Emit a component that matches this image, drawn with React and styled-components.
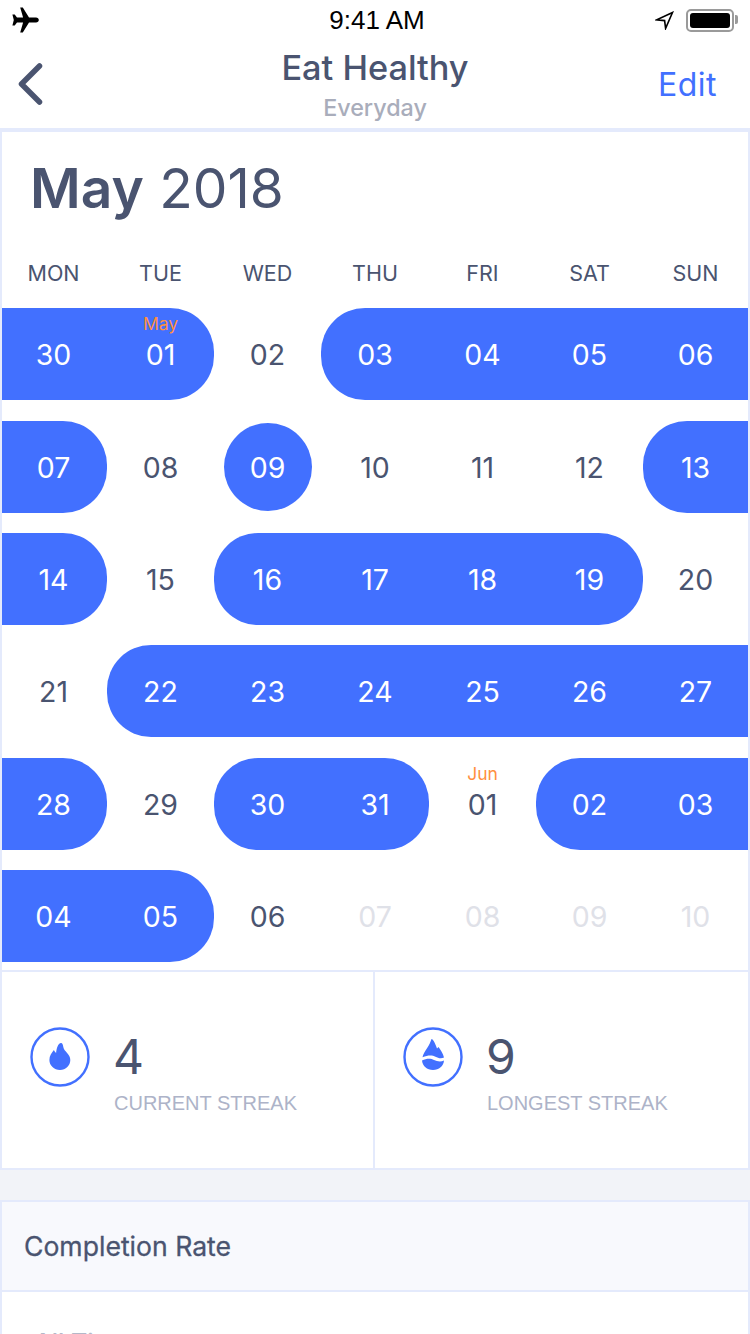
import React from 'react';
import styled, { createGlobalStyle } from 'styled-components';

const Global = createGlobalStyle`
  html, body { margin: 0; padding: 0; background: #fff; height: 1334px; overflow: hidden; }
  * { box-sizing: border-box; }
  body { font-family: Inter, "Liberation Sans", sans-serif; }
`;

const Page = styled.div`
  width: 750px;
  height: 1334px;
  overflow: hidden;
  background: #fff;
  display: flex;
  flex-direction: column;
`;

const StatusBar = styled.div`
  height: 40px;
  flex: none;
  position: relative;
  display: flex;
  align-items: center;
  justify-content: space-between;
  padding: 0 16px 0 11px;
`;

const StatusTime = styled.div`
  font: 400 26px/40px "Liberation Sans", sans-serif;
  color: #000;
  position: absolute;
  left: 4px;
  right: 0;
  text-align: center;
`;

const StatusRight = styled.div`
  display: flex;
  align-items: center;
  gap: 12px;
`;

const Battery = styled.div`
  width: 48px;
  height: 23px;
  border: 2px solid #9a9a9a;
  border-radius: 5px;
  padding: 2px;
  position: relative;
  &::before {
    content: '';
    display: block;
    height: 100%;
    background: #000;
    border-radius: 3px;
  }
  &::after {
    content: '';
    position: absolute;
    right: -6px;
    top: 4px;
    width: 3px;
    height: 9px;
    background: #9a9a9a;
    border-radius: 0 2px 2px 0;
  }
`;

const NavBar = styled.div`
  height: 88px;
  flex: none;
  position: relative;
  display: flex;
  align-items: center;
  justify-content: space-between;
  padding: 0 33px 0 17px;
`;

const NavCenter = styled.div`
  position: absolute;
  left: 0;
  right: 0;
  top: 3px;
  text-align: center;
`;

const NavTitle = styled.div`
  font-size: 34.3px;
  line-height: 50px;
  font-weight: 500;
  color: #4a5470;
`;

const NavSub = styled.div`
  font-size: 23.3px;
  line-height: 30px;
  font-weight: 500;
  color: #a9adbb;
`;

const EditLink = styled.div`
  font-size: 32px;
  font-weight: 400;
  letter-spacing: 0.5px;
  line-height: 40px;
  color: #4270ff;
  margin-top: 2px;
`;

const Card = styled.section`
  border: 2px solid #e4eafc;
  border-top-width: ${p => p.$top || 2}px;
  background: #fff;
  flex: none;
`;

const Calendar = styled(Card)`
  height: 842px;
  border-bottom: 0;
`;

const MonthTitle = styled.h1`
  margin: 0;
  padding: 0 0 0 28px;
  height: 118px;
  font-size: 55px;
  line-height: 112px;
  font-weight: 400;
  color: #4a5470;
  strong { font-weight: 600; }
`;

const Grid = styled.div`
  display: grid;
  grid-template-columns: 105px 107px 107px 108px 107px 107px 105px;
`;

const WeekHead = styled(Grid)`
  height: 58px;
  align-items: start;
`;

const WeekDay = styled.div`
  text-align: center;
  font-size: 21.5px;
  line-height: 46px;
  color: #4a5470;
  &:first-child { padding-right: 2px; }
`;

const WeekRow = styled(Grid)`
  height: 92px;
  margin-bottom: ${p => p.$gap}px;
`;

const Day = styled.div`
  position: relative;
  display: flex;
  align-items: center;
  justify-content: center;
  font-size: 28.5px;
  font-weight: 400;
  color: ${p => (p.$on ? '#fff' : p.$muted ? '#dfe1e8' : '#4a5470')};
  background: ${p => (p.$on ? '#4270ff' : 'transparent')};
  border-top-left-radius: ${p => (p.$start ? '44px' : 0)};
  border-bottom-left-radius: ${p => (p.$start ? '44px' : 0)};
  border-top-right-radius: ${p => (p.$end ? '44px' : 0)};
  border-bottom-right-radius: ${p => (p.$end ? '44px' : 0)};
  &:first-child { padding-right: 2px; }
`;

const Circle = styled.div`
  width: 88px;
  height: 88px;
  border-radius: 50%;
  background: #4270ff;
  color: #fff;
  display: flex;
  align-items: center;
  justify-content: center;
`;

const MonthTag = styled.span`
  position: absolute;
  top: 7px;
  left: 0;
  right: 0;
  text-align: center;
  font-size: 17.5px;
  line-height: 18px;
  color: #ff8f3f;
`;

const Stats = styled(Card)`
  height: 200px;
  display: grid;
  grid-template-columns: 371px 1fr;
`;

const Stat = styled.div`
  display: flex;
  align-items: flex-start;
  padding: 55px 0 0 28px;
  gap: 24px;
  & + & { border-left: 2px solid #e4eafc; }
`;

const StatValue = styled.div`
  font-size: 48px;
  line-height: 56px;
  color: #4a5470;
  margin-top: 2px;
  margin-left: -1px;
`;

const StatLabel = styled.div`
  font: 400 20px/24px "Liberation Sans", sans-serif;
  color: #adb3c8;
  margin-top: 6px;
`;

const Gap = styled.div`
  height: 30px;
  flex: none;
  background: #f2f3f8;
`;

const SectionHead = styled(Card)`
  height: 92px;
  background: #f8f9fd;
  font-size: 26.6px;
  font-weight: 400;
  -webkit-text-stroke: 0.3px #4a5470;
  line-height: 88px;
  color: #4a5470;
  padding-left: 22px;
`;

const SectionBody = styled.div`
  flex: 1;
  border-left: 2px solid #e4eafc;
  border-right: 2px solid #e4eafc;
  padding: 36px 0 0 32px;
  font-size: 25px;
  font-weight: 500;
  line-height: 30px;
  color: #b4b8c8;
`;

const rowGaps = [21, 20, 20, 21, 20, 8];

const weeks = [
  [['30', 1], ['01', 1, 0, 1, 'May'], ['02'], ['03', 1, 1, 0], ['04', 1], ['05', 1], ['06', 1]],
  [['07', 1, 0, 1], ['08'], ['09', 'c'], ['10'], ['11'], ['12'], ['13', 1, 1, 0]],
  [['14', 1, 0, 1], ['15'], ['16', 1, 1, 0], ['17', 1], ['18', 1], ['19', 1, 0, 1], ['20']],
  [['21'], ['22', 1, 1, 0], ['23', 1], ['24', 1], ['25', 1], ['26', 1], ['27', 1]],
  [['28', 1, 0, 1], ['29'], ['30', 1, 1, 0], ['31', 1, 0, 1], ['01', 0, 0, 0, 'Jun'], ['02', 1, 1, 0], ['03', 1]],
  [['04', 1], ['05', 1, 0, 1], ['06'], ['07', 'm'], ['08', 'm'], ['09', 'm'], ['10', 'm']],
];

const dayNames = ['MON', 'TUE', 'WED', 'THU', 'FRI', 'SAT', 'SUN'];

function DayCell({ data }) {
  const [label, on, start, end, tag] = data;
  if (on === 'c') return <Day><Circle>{label}</Circle></Day>;
  return (
    <Day $on={on === 1} $muted={on === 'm'} $start={!!start} $end={!!end}>
      {tag && <MonthTag>{tag}</MonthTag>}
      {label}
    </Day>
  );
}

const Plane = () => (
  <svg width="28" height="26" viewBox="0 0 28 26">
    <path fill="#000" d="M9.2 0.5h2.600l6.200 10h7c1.600 0 2.800 1.100 2.800 2.500s-1.200 2.500-2.800 2.500h-7l-6.200 10h-2.600l2.900-10h-6.100l-2.300 3h-2.300l1.400-5.500-1.400-5.500h2.300l2.300 3h6.100z" />
  </svg>
);

const Arrow = () => (
  <svg width="19" height="19" viewBox="0 0 19 19">
    <path fill="none" stroke="#000" strokeWidth="1.600" strokeLinejoin="miter" d="M17.500 1.500 1.800 8.800l7.800 .8 1 7.800z" />
  </svg>
);

const Back = () => (
  <svg width="30" height="48" viewBox="0 0 30 48">
    <path fill="none" stroke="#4a5470" strokeWidth="5.500" strokeLinecap="round" strokeLinejoin="round" d="M22.500 6 4.500 24 22.500 42" />
  </svg>
);

const Flame = () => (
  <svg width="60" height="60" viewBox="0 0 60 60">
    <circle cx="30" cy="30" r="28.500" fill="none" stroke="#4270ff" strokeWidth="2.400" />
    <path fill="#4270ff" d="M31 16c1.500 0 2 2 2.300 4 .5 2.500 2 3.800 4 6.300 1.700 2 3 3.900 3 6.700 0 5.600-4.500 10-10.300 10s-10.600-4.400-10.600-10c0-4.200 2.200-7 4.500-10 .6 1.300 1.300 2.300 2.200 3 .3-4 2-10 4.900-10z" />
  </svg>
);

const Drop = () => (
  <svg width="60" height="60" viewBox="0 0 60 60">
    <circle cx="30" cy="30" r="28.500" fill="none" stroke="#4270ff" strokeWidth="2.400" />
    <path fill="#4270ff" d="M28.500 12c2 .5 4 5 5.500 9.500.6-.5 1-1 1.500-1.500 2 3 4.500 6 5.500 10.500-3 1.500-6 .5-8.500-.8-3-1.500-7-2-13 .5.600-3 2.500-6 4.500-9 2-3 3.500-6 4.500-9.200z" />
    <path fill="#4270ff" d="M19 33.500c5-2.500 9-2 12-.6 3 1.400 6.500 2.200 10 .6-.3 5.500-5 9.500-11 9.500-6 0-10.500-4-11-9.500z" />
  </svg>
);

export default function App() {
  return (
    <Page>
      <Global />
      <StatusBar>
        <Plane />
        <StatusTime>9:41 AM</StatusTime>
        <StatusRight>
          <Arrow />
          <Battery />
        </StatusRight>
      </StatusBar>
      <NavBar>
        <Back />
        <NavCenter>
          <NavTitle>Eat Healthy</NavTitle>
          <NavSub>Everyday</NavSub>
        </NavCenter>
        <EditLink>Edit</EditLink>
      </NavBar>
      <Calendar $top={4}>
        <MonthTitle><strong>May</strong> 2018</MonthTitle>
        <WeekHead>
          {dayNames.map(d => <WeekDay key={d}>{d}</WeekDay>)}
        </WeekHead>
        {weeks.map((w, i) => (
          <WeekRow key={i} $gap={rowGaps[i]}>
            {w.map((d, j) => <DayCell key={j} data={d} />)}
          </WeekRow>
        ))}
      </Calendar>
      <Stats>
        <Stat>
          <Flame />
          <div>
            <StatValue>4</StatValue>
            <StatLabel>CURRENT STREAK</StatLabel>
          </div>
        </Stat>
        <Stat>
          <Drop />
          <div>
            <StatValue>9</StatValue>
            <StatLabel>LONGEST STREAK</StatLabel>
          </div>
        </Stat>
      </Stats>
      <Gap />
      <SectionHead>Completion Rate</SectionHead>
      <SectionBody>All Time</SectionBody>
    </Page>
  );
}
